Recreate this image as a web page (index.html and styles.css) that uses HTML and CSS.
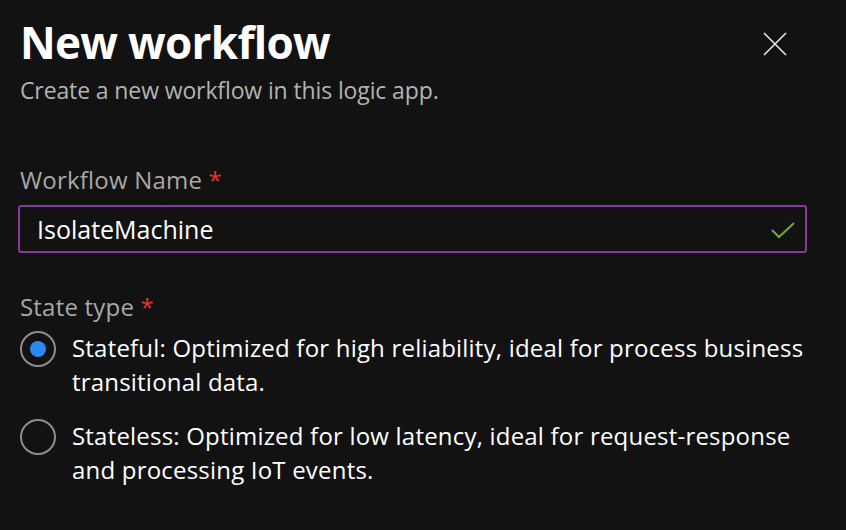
FILE: index.html
```html
<!DOCTYPE html>
<html lang="en">
<head>
<meta charset="utf-8">
<title>New workflow</title>
<link rel="stylesheet" href="styles.css">
</head>
<body>
<div class="panel">
  <header class="header">
    <div class="titles">
      <h1 class="title">New workflow</h1>
      <p class="subtitle">Create a new workflow in this logic app.</p>
    </div>
    <button class="close" aria-label="Close">
      <svg width="24" height="24" viewBox="0 0 24 24"><path d="M1 1 L23 23 M23 1 L1 23" stroke="#e8e8e8" stroke-width="1.6" fill="none"/></svg>
    </button>
  </header>

  <div class="field">
    <label class="label">Workflow Name <span class="req">*</span></label>
    <div class="input">
      <span class="value">IsolateMachine</span>
      <svg class="check" width="24" height="18" viewBox="0 0 24 18"><path d="M1 8 L8 15 L23 1" stroke="#6fac31" stroke-width="2" fill="none"/></svg>
    </div>
  </div>

  <div class="field state">
    <label class="label">State type <span class="req">*</span></label>
    <div class="options">
      <div class="option">
        <span class="radio checked"></span>
        <span class="text">Stateful: Optimized for high reliability, ideal for process business transitional data.</span>
      </div>
      <div class="option">
        <span class="radio"></span>
        <span class="text">Stateless: Optimized for low latency, ideal for request-response and processing IoT events.</span>
      </div>
    </div>
  </div>
</div>
</body>
</html>
```

FILE: styles.css
```css
html, body {
  margin: 0;
  padding: 0;
  background: #121212;
}
body {
  font-family: "Open Sans", "Noto Sans", sans-serif;
  color: #ffffff;
  width: 846px;
  height: 530px;
  overflow: hidden;
}
.panel {
  padding: 0 39px 0 18px;
}
.header {
  display: flex;
  justify-content: space-between;
  align-items: flex-start;
}
.titles {
  padding-left: 2px;
}
.title {
  margin: 0;
  padding-top: 10px;
  font-size: 44px;
  font-weight: 700;
  line-height: 64px;
  letter-spacing: -0.7px;
}
.subtitle {
  margin: 0;
  font-size: 23px;
  line-height: 32px;
  color: #b3b3b3;
  letter-spacing: -0.12px;
}
.close {
  margin-top: 32px;
  margin-right: 20px;
  background: none;
  border: none;
  padding: 0;
  width: 24px;
  height: 24px;
}
.field {
  margin-top: 58px;
}
.label {
  display: block;
  padding-left: 2px;
  font-size: 24px;
  line-height: 32px;
  color: #a8a8a8;
  letter-spacing: 0.2px;
}
.req {
  color: #e0362e;
}
.input {
  margin-top: 9px;
  height: 44px;
  border: 2px solid #86389f;
  border-radius: 3px;
  display: flex;
  align-items: center;
  justify-content: space-between;
  padding: 0 10px 0 17px;
}
.value {
  font-size: 25px;
  letter-spacing: 0;
}
.check {
  margin-top: 4px;
}
.state {
  margin-top: 38px;
}
.options {
  margin-top: 8px;
  display: flex;
  flex-direction: column;
  gap: 20px;
}
.option {
  display: flex;
  align-items: flex-start;
  gap: 16px;
  padding-left: 2px;
}
.radio {
  flex: none;
  box-sizing: border-box;
  width: 36px;
  height: 36px;
  border-radius: 50%;
  border: 2px solid #8d8d8d;
  display: flex;
  align-items: center;
  justify-content: center;
}
.radio.checked::after {
  content: "";
  width: 16px;
  height: 16px;
  border-radius: 50%;
  background: #2b88f2;
}
.text {
  font-size: 24px;
  line-height: 34px;
  letter-spacing: 0.2px;
}
```
